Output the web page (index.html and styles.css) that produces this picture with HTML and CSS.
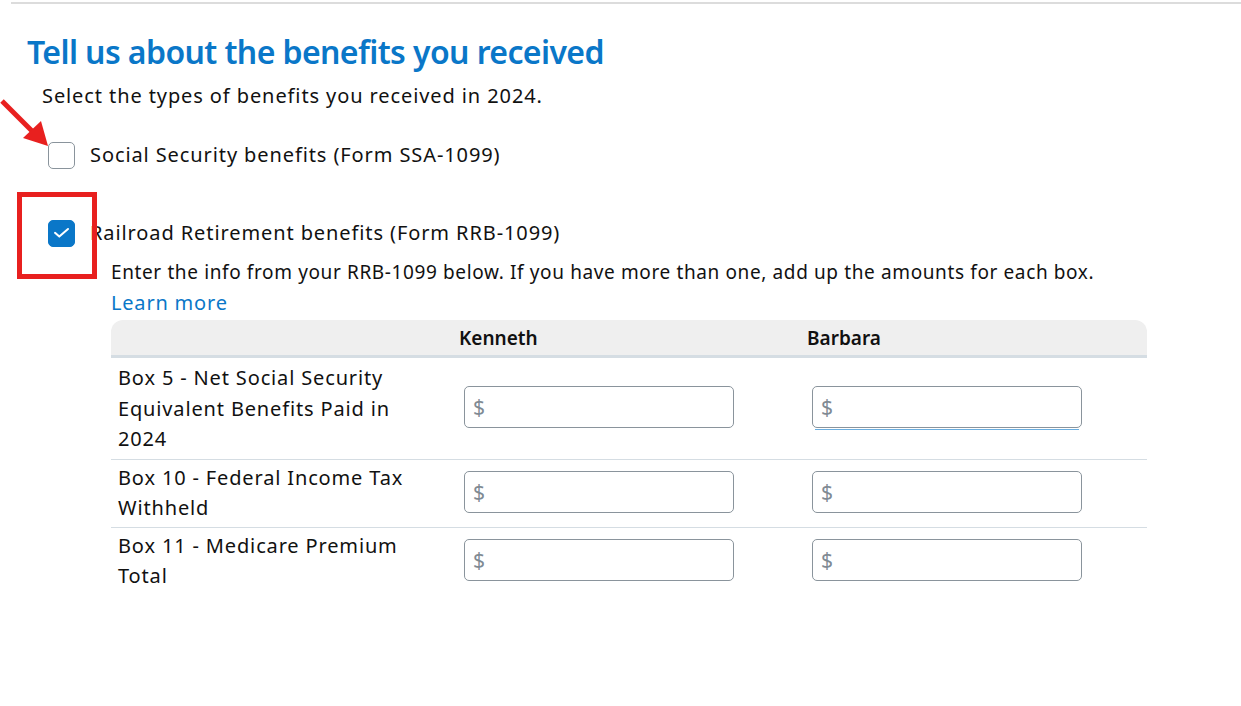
FILE: index.html
```html
<!DOCTYPE html>
<html>
<head>
<meta charset="utf-8">
<link rel="stylesheet" href="styles.css">
</head>
<body>
<div class="page">
  <div class="topline"></div>
  <main class="content">
    <h1 class="title">Tell us about the benefits you received</h1>
    <p class="intro">Select the types of benefits you received in 2024.</p>

    <label class="option option-first">
      <span class="box"></span>
      <span class="option-text">Social Security benefits (Form SSA-1099)</span>
    </label>

    <label class="option option-second">
      <span class="box box-checked">
        <svg width="17" height="12" viewBox="0 0 17 12"><path d="M2 5.8 L6.3 9.6 L15 2" fill="none" stroke="#fff" stroke-width="2" stroke-linecap="round" stroke-linejoin="round"/></svg>
      </span>
      <span class="option-text">Railroad Retirement benefits (Form RRB-1099)</span>
    </label>

    <section class="details">
      <p class="hint">Enter the info from your RRB-1099 below. If you have more than one, add up the amounts for each box.</p>
      <a class="learn" href="#">Learn more</a>

      <div class="grid">
        <div class="head">
          <div class="hcell"></div>
          <div class="hcell">Kenneth</div>
          <div class="hcell">Barbara</div>
        </div>
        <div class="row row-first">
          <div class="label">Box 5 - Net Social Security Equivalent Benefits Paid in 2024</div>
          <div class="cell"><div class="input"><span class="dollar">$</span></div></div>
          <div class="cell"><div class="input input-focus"><span class="dollar">$</span></div></div>
        </div>
        <div class="row">
          <div class="label">Box 10 - Federal Income Tax Withheld</div>
          <div class="cell"><div class="input"><span class="dollar">$</span></div></div>
          <div class="cell"><div class="input"><span class="dollar">$</span></div></div>
        </div>
        <div class="row row-last">
          <div class="label">Box 11 - Medicare Premium Total</div>
          <div class="cell"><div class="input"><span class="dollar">$</span></div></div>
          <div class="cell"><div class="input"><span class="dollar">$</span></div></div>
        </div>
      </div>
    </section>
  </main>

  <svg class="arrow" width="60" height="60" viewBox="0 0 60 60">
    <line x1="2" y1="2" x2="34" y2="34" stroke="#e8201f" stroke-width="5"/>
    <polygon points="48,47 23,39 41,22" fill="#e8201f"/>
  </svg>
  <div class="highlight"></div>
</div>
</body>
</html>
```

FILE: styles.css
```css
* { box-sizing: border-box; }
html, body { margin: 0; padding: 0; background: #fff; }
body {
  font-family: "Noto Sans", "Open Sans", sans-serif;
  color: #111;
}
.page {
  position: relative;
  width: 1241px;
  height: 706px;
  overflow: hidden;
}
.topline {
  margin-left: 11px;
  margin-top: 2px;
  height: 2px;
  background: #dcdcdc;
}
.content {
  padding-left: 27px;
}
.title {
  margin: 28px 0 0 0;
  font-size: 32px;
  line-height: 40px;
  font-weight: 600;
  color: #0a77c8;
  letter-spacing: -0.6px;
}
.intro {
  margin: 10px 0 0 15px;
  font-size: 20px;
  line-height: 28px;
  letter-spacing: 0.9px;
}
.option {
  display: flex;
  align-items: center;
  gap: 15px;
  margin-left: 21px;
  font-size: 20px;
  line-height: 28px;
  letter-spacing: 0.9px;
}
.option-first { margin-top: 31px; }
.option-second { margin-top: 50px; }
.box {
  width: 27px;
  height: 27px;
  border: 1px solid #8a949c;
  border-radius: 5px;
  flex: none;
  display: flex;
  align-items: center;
  justify-content: center;
  background: #fff;
}
.box-checked {
  background: #0a77c8;
  border-color: #0a77c8;
}
.details {
  margin-left: 84px;
}
.hint {
  margin: 11px 0 0 0;
  font-size: 19px;
  line-height: 28px;
  letter-spacing: 0.62px;
}
.learn {
  display: block;
  font-size: 20px;
  line-height: 28px;
  margin-top: 3px;
  color: #0a77c8;
  text-decoration: none;
  width: max-content;
  letter-spacing: 0.8px;
}
.grid {
  margin-top: 3px;
  width: 1036px;
}
.head {
  display: grid;
  grid-template-columns: 348px 348px 1fr;
  height: 38px;
  background: #efefef;
  border-radius: 12px 12px 0 0;
  border-bottom: 3px solid #d5dde3;
  align-items: center;
}
.hcell {
  font-weight: 600;
  font-size: 19px;
  padding-top: 1px;
}
.row {
  display: grid;
  grid-template-columns: 348px 348px 1fr;
  border-bottom: 1px solid #d5dde3;
  align-items: center;
}
.row-last { border-bottom: none; }
.label {
  padding: 3px 0 3px 7px;
  width: 312px;
  font-size: 20px;
  line-height: 30.5px;
  letter-spacing: 0.85px;
}
.row-first .label { padding-top: 5px; padding-bottom: 4px; }
.cell { padding-left: 5px; padding-bottom: 2px; }
.input {
  width: 270px;
  height: 42px;
  border: 1px solid #8a949c;
  border-radius: 5px;
  display: flex;
  align-items: center;
  padding-left: 8px;
  position: relative;
}
.input-focus::after {
  content: "";
  position: absolute;
  left: 2px;
  right: 2px;
  bottom: -3px;
  height: 1px;
  background: #6aaee0;
}
.dollar {
  color: #7f8a93;
  font-size: 21px;
}
.arrow {
  position: absolute;
  left: 0;
  top: 99px;
}
.highlight {
  position: absolute;
  left: 17px;
  top: 192px;
  width: 80px;
  height: 87px;
  border: 5px solid #e8201f;
}
```
